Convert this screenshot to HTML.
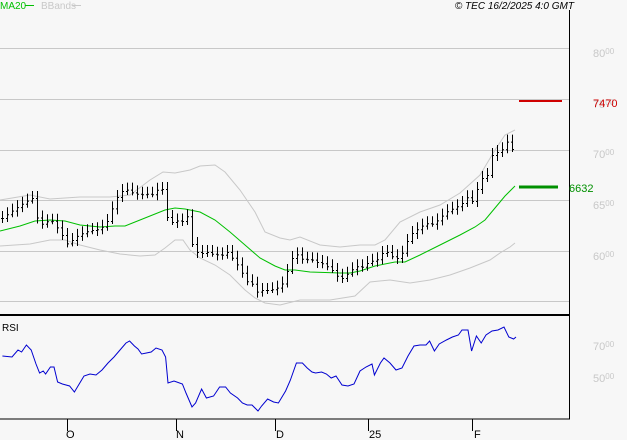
<!DOCTYPE html>
<html><head><meta charset="utf-8"><style>
html,body{margin:0;padding:0;background:#f7f7f7;width:627px;height:440px;overflow:hidden;font-family:"Liberation Sans",sans-serif}
svg{position:absolute;left:0;top:0}
</style></head><body>
<svg id="s" width="627" height="440" xmlns="http://www.w3.org/2000/svg" font-family="Liberation Sans, sans-serif">
<rect width="627" height="440" fill="#f7f7f7"/>
<g stroke="#c8c8c8" stroke-width="1">
<line x1="0" y1="48.5" x2="569" y2="48.5"/><line x1="0" y1="99.5" x2="569" y2="99.5"/>
<line x1="0" y1="150.5" x2="569" y2="150.5"/><line x1="0" y1="200.5" x2="569" y2="200.5"/>
<line x1="0" y1="251.5" x2="569" y2="251.5"/><line x1="0" y1="301.5" x2="569" y2="301.5"/>
</g>
<g fill="none" stroke="#c8c8c8" stroke-width="1">
<polyline points="0,200 30,195 50,199 80,197 110,197 130,195 150,180 163,172 175,173 190,170 200,166 215,165 225,172 240,190 255,212 265,232 280,238 290,240 300,237 320,245 340,247 360,245 375,245 385,240 400,222 420,212 440,205 460,193 480,175 495,150 505,135 515,130"/>
<polyline points="0,246 30,244 50,240 65,240 80,245 100,250 120,254 140,256 155,255 165,248 175,240 183,240 190,250 200,258 215,265 230,275 245,290 255,298 265,303 280,305 300,300 330,300 355,296 370,282 390,280 410,283 430,280 450,275 470,268 490,260 500,253 510,247 515,243"/>
</g>
<polyline fill="none" stroke="#00c000" stroke-width="1" points="0,231 20,226 35,221 50,220 65,221 80,225 100,227 115,226 125,226 140,220 155,214 165,210 175,208 185,209 200,212 215,220 230,232 245,245 260,258 275,266 285,270 295,270 310,272 340,273 350,273 360,271 375,266 395,262 405,262 420,255 440,245 460,235 475,227 485,220 495,208 505,196 515,186"/>
<g id="bars" stroke="#000" stroke-width="1"></g>
<line x1="519" y1="101" x2="562" y2="101" stroke="#d00000" stroke-width="2"/>
<line x1="519" y1="187" x2="558" y2="187" stroke="#009000" stroke-width="3"/>
<line x1="569.5" y1="10" x2="569.5" y2="419" stroke="#000"/>
<line x1="0" y1="315" x2="570" y2="315" stroke="#000" stroke-width="2"/>
<line x1="0" y1="419" x2="570" y2="419" stroke="#000"/>
<g stroke="#000"><line x1="67.5" y1="419" x2="67.5" y2="431"/><line x1="176.5" y1="419" x2="176.5" y2="431"/><line x1="275.5" y1="419" x2="275.5" y2="431"/><line x1="368.5" y1="419" x2="368.5" y2="431"/><line x1="472.5" y1="419" x2="472.5" y2="431"/></g>
<g font-size="11" fill="#000"><text x="66" y="438">O</text><text x="176" y="438">N</text><text x="276" y="438">D</text><text x="369" y="438">25</text><text x="474" y="438">F</text></g>
<g transform="scale(1.2,1)">
<polyline fill="none" stroke="#0000d0" stroke-width="1" vector-effect="non-scaling-stroke" points="2,356 10,357 15,350 18,352 22,345 26,350 30,364 33,373 36,371 38,374 42,367 45,367 48,382 52,384 58,386 62,392 65,386 68,380 70,376 75,374 80,375 85,370 90,363 95,357 100,350 105,343 108,341 112,346 115,349 118,354 122,353 126,352 130,348 135,350 138,357 140,383 145,381 152,384 155,393 160,407 163,403 168,389 172,398 178,396 183,387 188,387 192,393 198,398 202,403 206,405 210,405 215,411 218,406 223,399 228,402 232,403 238,391 242,380 247,363 252,363 256,368 260,372 263,373 268,372 272,374 276,378 280,376 285,385 290,386 295,384 300,371 305,367 310,364 312,375 317,363 320,358 325,363 330,370 335,368 340,356 345,346 350,345 355,345 358,341 362,351 366,344 372,340 377,337 382,335 385,330 390,330 393,351 397,336 401,343 405,335 410,331 415,330 420,327 424,337 428,339 430,337"/>
</g>
<text x="2" y="331" font-size="10" fill="#000">RSI</text>
<g font-size="11" fill="#c8c8c8">
<text x="593" y="57">80<tspan font-size="8" dy="-3">00</tspan></text>
<text x="593" y="108">75<tspan font-size="8" dy="-3">00</tspan></text>
<text x="593" y="158">70<tspan font-size="8" dy="-3">00</tspan></text>
<text x="593" y="209">65<tspan font-size="8" dy="-3">00</tspan></text>
<text x="593" y="260">60<tspan font-size="8" dy="-3">00</tspan></text>
<text x="593" y="350">70<tspan font-size="8" dy="-3">00</tspan></text>
<text x="593" y="382">50<tspan font-size="8" dy="-3">00</tspan></text>
</g>
<text x="593" y="107" font-size="11" fill="#d00000">7470</text>
<text x="569" y="192" font-size="11" fill="#009000">6632</text>
<text x="0" y="9" font-size="10" fill="#00c000">MA20</text>
<line x1="25" y1="5.5" x2="34" y2="5.5" stroke="#00c000"/>
<text x="41" y="9" font-size="10" fill="#c8c8c8">BBands</text>
<line x1="72" y1="5.5" x2="81" y2="5.5" stroke="#c8c8c8"/>
<text x="574" y="9" font-size="10" font-style="italic" fill="#000" text-anchor="end">© TEC 16/2/2025 4:0 GMT</text>
</svg>
<script>
var p=[[2,218],[10,212],[20,205],[28,200],[32,198],[36,215],[40,225],[45,222],[50,220],[55,222],[58,230],[62,235],[68,245],[72,240],[78,235],[85,232],[90,230],[95,230],[100,228],[105,225],[110,215],[113,205],[118,195],[125,188],[130,192],[135,193],[140,195],[145,193],[150,195],[155,193],[160,185],[165,195],[168,228],[172,222],[176,220],[180,222],[184,220],[188,215],[190,240],[195,250],[200,255],[205,250],[210,255],[215,252],[220,258],[225,250],[230,255],[235,262],[240,268],[245,280],[250,283],[255,285],[258,295],[262,290],[266,290],[270,290],[275,288],[280,287],[284,280],[288,268],[292,258],[295,252],[300,258],[305,260],[310,258],[315,262],[320,262],[325,265],[330,268],[335,273],[340,280],[345,275],[350,272],[355,265],[360,268],[365,265],[370,260],[375,262],[380,255],[385,250],[390,255],[395,258],[400,258],[405,245],[410,235],[415,230],[420,228],[425,222],[430,225],[435,222],[440,218],[445,212],[450,210],[455,207],[460,205],[465,200],[470,193],[473,205],[478,185],[482,178],[487,175],[492,155],[496,152],[500,152],[505,145],[508,140],[510,148],[514,150]];
function f(x){for(var i=1;i<p.length;i++){if(x<=p[i][0]){var a=p[i-1],b=p[i];return a[1]+(b[1]-a[1])*(x-a[0])/(b[0]-a[0]);}}return p[p.length-1][1];}
var g=document.getElementById('bars'),h='',prev=f(2);
for(var x=2;x<=514;x+=5){var c=f(x),hi=Math.min(prev,c)-3-((x*7)%5),lo=Math.max(prev,c)+3+((x*3)%4);
h+='<line x1="'+(x+.5)+'" y1="'+hi+'" x2="'+(x+.5)+'" y2="'+lo+'"/><line x1="'+(x-1)+'" y1="'+(prev+.5)+'" x2="'+x+'" y2="'+(prev+.5)+'"/><line x1="'+(x+1)+'" y1="'+(c+.5)+'" x2="'+(x+2)+'" y2="'+(c+.5)+'"/>';prev=c;}
g.innerHTML=h;
</script>
</body></html>
